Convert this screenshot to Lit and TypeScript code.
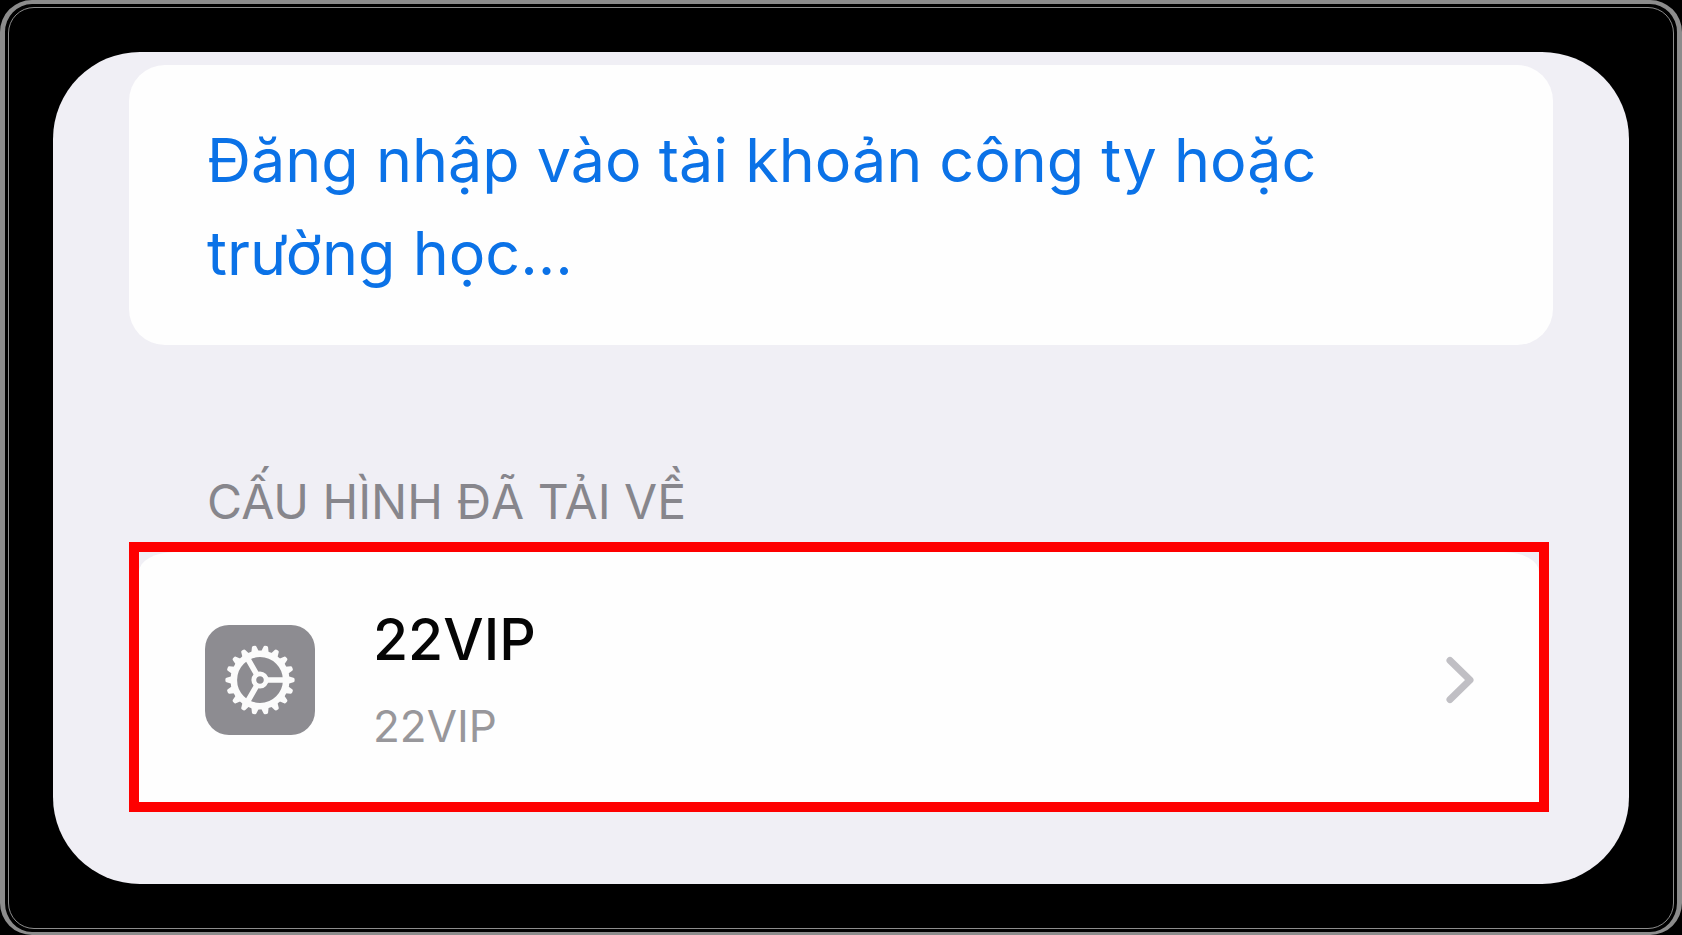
import { LitElement, html, svg, css } from "lit";
import { customElement } from "lit/decorators.js";

const TEETH = Array.from({ length: 18 }, (_, i) => i * 20);
const SPOKES = [0, 120, 240];

@customElement("settings-icon")
class SettingsIcon extends LitElement {
  static styles = css`
    :host {
      display: block;
      flex: none;
      width: 110px;
      height: 110px;
    }
    .icon {
      display: block;
      width: 100%;
      height: 100%;
    }
  `;

  render() {
    return html`
      <svg class="icon" viewBox="-55 -55 110 110" aria-hidden="true">
        <rect x="-55" y="-55" width="110" height="110" rx="24" fill="#8d8c91" />
        <g fill="none" stroke="#fbfbfb" stroke-linecap="round">
          <circle r="26.2" stroke-width="6.6" />
          <circle r="6.2" stroke-width="4.8" />
          ${TEETH.map((a) => svg`<path d="M28 -2.2L33 -0.8V0.8L28 2.2Z" fill="#fbfbfb" stroke-width="3.2" stroke-linejoin="round" transform="rotate(${a})" />`)}
          ${SPOKES.map((a) => svg`<path d="M8 0H26" stroke-width="5.6" transform="rotate(${a})" />`)}
        </g>
      </svg>
    `;
  }
}

@customElement("app-root")
class AppRoot extends LitElement {
  static styles = css`
    :host {
      display: block;
      background: #000;
      font-family: Inter, "Noto Sans", sans-serif;
    }
    .device {
      box-sizing: border-box;
      min-height: 100vh;
      display: flex;
      border: solid #8c8c8c;
      border-width: 4px 5px 3px;
      border-radius: 32px;
      padding: 3px;
      background: #000;
    }
    .bezel {
      flex: 1;
      display: flex;
      border: 1px solid #8c8c8c;
      border-radius: 26px;
      padding: 44px;
    }
    .sheet {
      flex: 1;
      min-width: 0;
      box-sizing: border-box;
      border-radius: 87px;
      padding: 13px 76px 72px;
      background: #f0eff5;
    }
    .account {
      display: block;
      border-radius: 36px;
      padding: 49px 78px 45px;
      background: #fefefe;
      color: #0b72e7;
      font-size: 61px;
      line-height: 93px;
      text-decoration: none;
    }
    .heading {
      margin: 127px 78px 10px;
      color: #87868c;
      font-size: 48px;
      line-height: 60px;
      font-weight: 400;
    }
    .highlight {
      margin-right: 4px;
      border: 10px solid #fe0000;
      background: #f0eff5;
    }
    .profile {
      display: flex;
      align-items: center;
      gap: 58px;
      box-sizing: border-box;
      width: 100%;
      min-height: 250px;
      margin: 0;
      border: 0;
      border-radius: 36px 36px 0 0 / 20px 20px 0 0;
      padding: 18px 64px 12px 66px;
      background: #fefefe;
      font: inherit;
      text-align: left;
      cursor: pointer;
    }
    .labels {
      flex: 1;
      display: flex;
      flex-direction: column;
      gap: 20px;
    }
    .name {
      color: #050505;
      font-size: 57px;
      line-height: 72px;
      font-weight: 500;
    }
    .detail {
      color: #98979b;
      font-size: 44px;
      line-height: 60px;
    }
    .chevron {
      flex: none;
      width: 30px;
      height: 50px;
    }
  `;

  render() {
    return html`
      <div class="device">
        <div class="bezel">
          <main class="sheet">
            <a class="account" href="#">Đăng nhập vào tài khoản công ty hoặc trường học...</a>
            <h2 class="heading">CẤU HÌNH ĐÃ TẢI VỀ</h2>
            <div class="highlight">
              <button class="profile" type="button">
                <settings-icon></settings-icon>
                <span class="labels">
                  <span class="name">22VIP</span>
                  <span class="detail">22VIP</span>
                </span>
                <svg class="chevron" viewBox="0 0 30 50" aria-hidden="true">
                  <path
                    d="M5 5.5L25 25L5 44.5"
                    fill="none"
                    stroke="#c0bfc4"
                    stroke-width="7"
                    stroke-linecap="round"
                    stroke-linejoin="round"
                  />
                </svg>
              </button>
            </div>
          </main>
        </div>
      </div>
    `;
  }
}
